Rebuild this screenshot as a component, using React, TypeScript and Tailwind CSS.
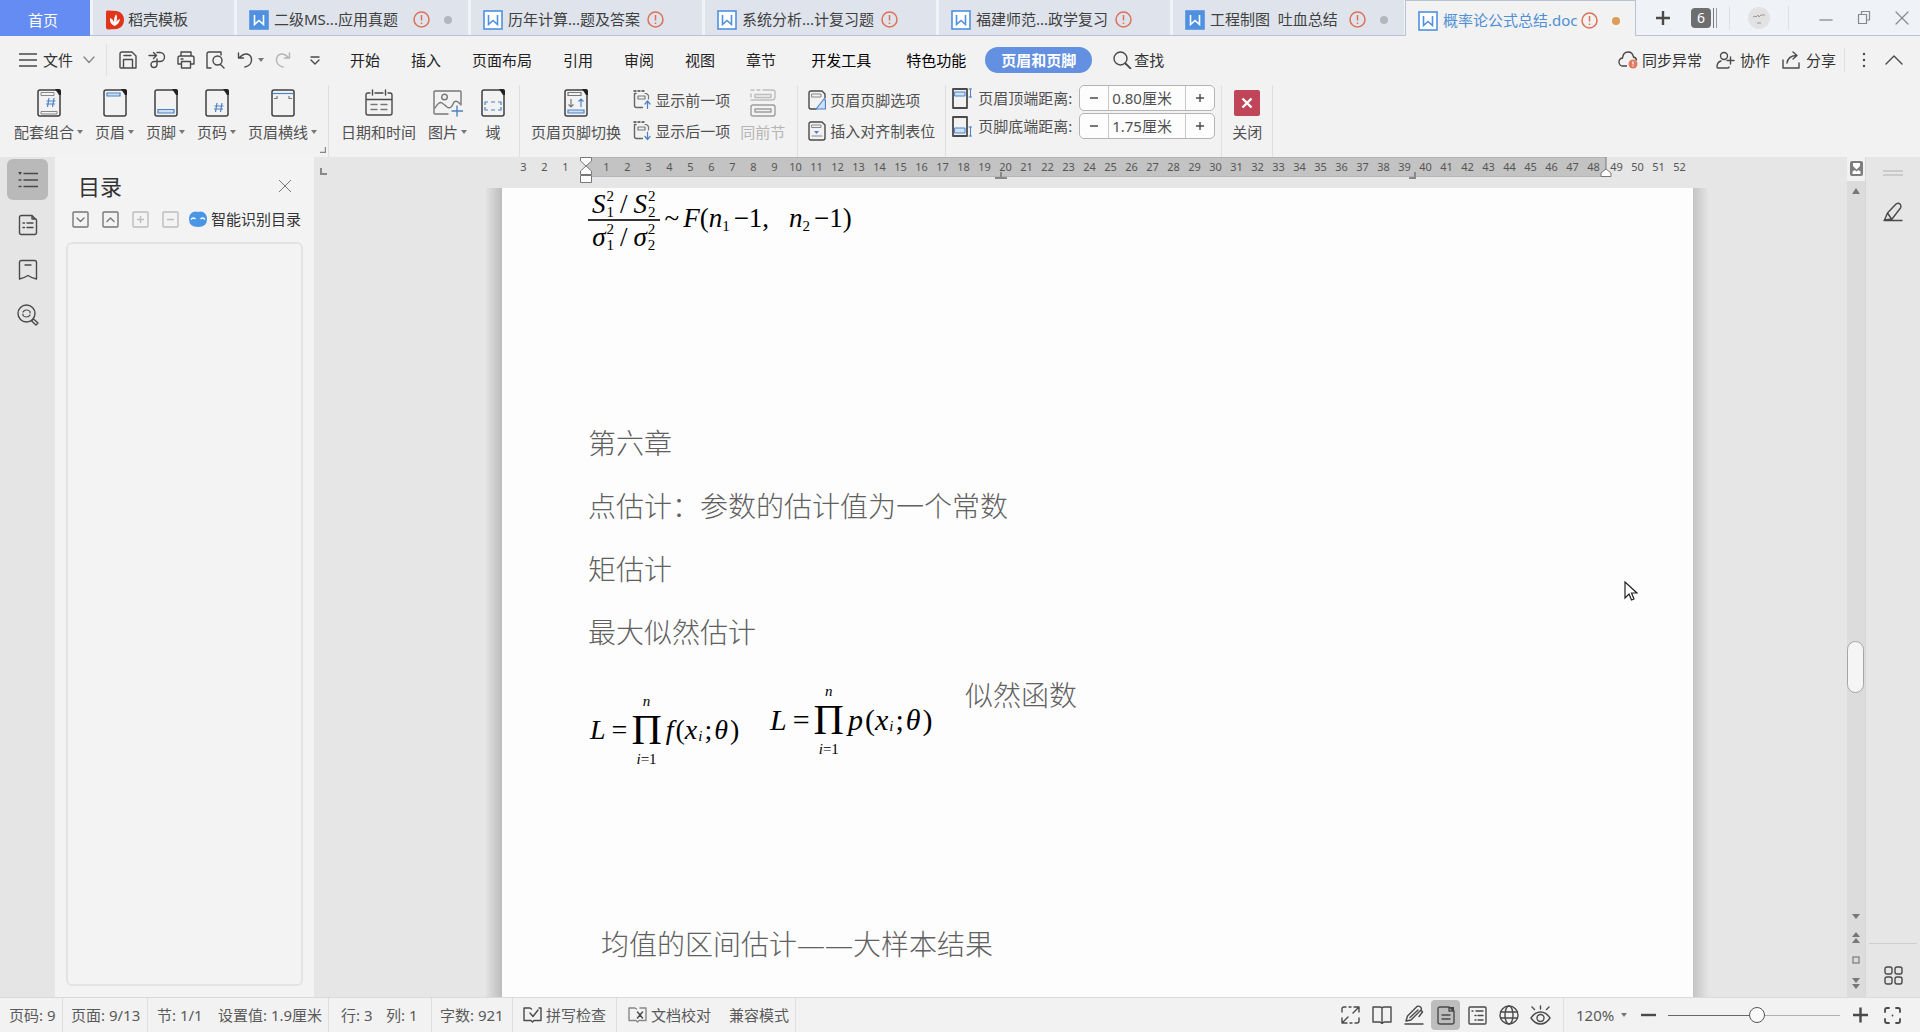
import React, { useState } from "react";

type IconProps = { w?: number; h?: number; children: React.ReactNode; className?: string };

const Svg = ({ w = 20, h = 20, children, className = "" }: IconProps) => (
  <svg
    width={w}
    height={h}
    viewBox={`0 0 ${w} ${h}`}
    fill="none"
    stroke="#4a4a4a"
    strokeWidth="1.4"
    strokeLinecap="round"
    strokeLinejoin="round"
    className={`shrink-0 ${className}`}
  >
    {children}
  </svg>
);

const Caret = () => (
  <svg width="6" height="4" viewBox="0 0 6 4" className="shrink-0" fill="#777">
    <path d="M0 0h6L3 4z" />
  </svg>
);

const Sep = ({ className = "" }: { className?: string }) => (
  <div className={`w-px shrink-0 bg-[#dfdfdf] ${className}`} />
);

/* ---------- title bar ---------- */

const WordIcon = ({ solid }: { solid?: boolean }) => (
  <svg width="20" height="20" viewBox="0 0 20 20" className="shrink-0" fill="none">
    <rect x="1" y="1" width="18" height="18" fill={solid ? "#4f91e0" : "#fff"} stroke="#4f91e0" strokeWidth="1.6" />
    <path d="M5.500 5v9.500L10 10.500l4.500 4V5" stroke={solid ? "#fff" : "#4f91e0"} strokeWidth="1.6" />
  </svg>
);

const Alert = () => (
  <svg width="17" height="17" viewBox="0 0 17 17" className="shrink-0" fill="none" stroke="#dd7059" strokeWidth="1.5">
    <circle cx="8.500" cy="8.500" r="7.500" />
    <path d="M8.500 4v5.500M8.500 11.500v1.500" />
  </svg>
);

const docTabs = [
  { title: "二级MS...应用真题", solid: true, dot: true },
  { title: "历年计算...题及答案", solid: false, dot: false },
  { title: "系统分析...计复习题", solid: false, dot: false },
  { title: "福建师范...政学复习", solid: false, dot: false },
  { title: "工程制图  吐血总结", solid: true, dot: true },
];

const TitleBar = () => (
  <header className="flex h-9 shrink-0 items-stretch bg-[#eff2f6] text-[15px] shadow-[inset_0_-1px_0_#b9c2d3]">
    <button className="w-[90px] shrink-0 bg-[#648cf2] pt-1 pr-1 text-white">首页</button>
    <div className="flex gap-[3px] pl-[3px]">
      <button className="mb-px flex w-[141px] items-center bg-[#dfe4ec] pt-1 pl-[13px]">
        <svg width="18" height="20" viewBox="0 0 18 20" className="mr-1 shrink-0">
          <path d="M0 2q0-2 2-1.500l9 .5q7 2 7 9t-7 9l-9 .5q-2 0-2-2z" fill="#e0341b" />
          <path d="M8.500 16Q3 13 4 8q3 1 4 4 0-5 2-8 2 4 0 8 1-2 4-3-.5 5-5.500 7z" fill="#fff" />
        </svg>
        稻壳模板
      </button>
      {docTabs.map((tab) => (
        <button key={tab.title} className="mb-px flex w-[231px] items-center bg-[#dfe4ec] pt-1 pl-3 text-left">
          <WordIcon solid={tab.solid} />
          <span className="ml-[5px] w-[132px] whitespace-pre">{tab.title}</span>
          <span className="ml-[7px]">
            <Alert />
          </span>
          {tab.dot && <span className="ml-[14px] h-2 w-2 rounded-full bg-[#b3b7bd]" />}
        </button>
      ))}
    </div>
    <button className="ml-px flex w-[231px] items-center border border-b-0 border-[#b9c2d3] bg-[#f2f2f2] pt-1 pl-3 text-left text-[#4f8fd6]">
      <WordIcon />
      <span className="ml-[5px] w-[138px] whitespace-nowrap">概率论公式总结.doc</span>
      <Alert />
      <span className="ml-[14px] h-2 w-2 rounded-full bg-[#dc9c5a]" />
    </button>
    <div className="ml-auto flex items-center pr-[11px]">
      <button aria-label="新建">
        <Svg w={16} h={16}>
          <path d="M8 1v14M1 8h14" strokeWidth="2.4" strokeLinecap="butt" />
        </Svg>
      </button>
      <button className="ml-5 flex items-center gap-px">
        <span className="h-5 w-5 rounded-sm bg-[#6e6e6e] text-center text-sm leading-5 text-white">6</span>
        <span className="ml-px h-5 w-px bg-[#777]" />
        <span className="ml-px h-5 w-px bg-[#999]" />
      </button>
      <Sep className="ml-3 h-6" />
      <span className="ml-[18px] flex h-[22px] w-[22px] items-center justify-center rounded-full bg-[#e2e2e2]">
        <svg width="14" height="14" viewBox="0 0 14 14" stroke="#999" fill="none">
          <path d="M1 6l2-1 1 1 2-2 1 2 2-2h4M5 12h4" />
        </svg>
      </span>
      <Sep className="ml-[18px] h-6" />
      <button aria-label="最小化" className="ml-[30px]">
        <Svg w={14} h={18}>
          <path d="M1 11h12" stroke="#999" strokeWidth="1.6" />
        </Svg>
      </button>
      <button aria-label="还原" className="ml-6">
        <Svg w={14} h={16}>
          <path d="M4.500 4V1.500h8V10H10M1.500 4.500h8v9h-8z" stroke="#888" strokeWidth="1.2" />
        </Svg>
      </button>
      <button aria-label="关闭窗口" className="ml-6">
        <Svg w={14} h={14}>
          <path d="M1 1l12 12M13 1L1 13" stroke="#888" strokeWidth="1.2" />
        </Svg>
      </button>
    </div>
  </header>
);

/* ---------- menu row ---------- */

const MenuRow = () => (
  <nav className="flex h-12 shrink-0 items-center text-[15px] whitespace-nowrap text-[#333]">
    <button className="ml-[19px] flex items-center">
      <Svg w={18} h={14}>
        <path d="M0 1h18M0 7h18M0 13h18" />
      </Svg>
      <span className="ml-[6px]">文件</span>
      <Svg w={12} h={8} className="ml-[10px]">
        <path d="M1 1l5 5.500L11 1" stroke="#888" />
      </Svg>
    </button>
    <Sep className="ml-[11px] h-8" />
    <div className="ml-3 flex items-center gap-[11px]">
      <button aria-label="保存">
        <Svg w={18} h={18}>
          <path d="M1 16V3q0-2 2-2h10l4 4v12H2q-1 0-1-1zM4.500 17V8.500h9V17M5 4.500h7" />
        </Svg>
      </button>
      <button aria-label="输出">
        <Svg w={18} h={18}>
          <path d="M1 4.500h7M5.500 1.500l3 3-3 3M9 1.500h3a4.500 4.500 0 010 9H9v3a3 3 0 01-6 0 3 3 0 013-3h3V8" />
        </Svg>
      </button>
      <button aria-label="打印">
        <Svg w={18} h={18}>
          <path d="M4 5V1h10v4M4 13H1V7q0-2 2-2h12q2 0 2 2v6h-3M4.500 10.500h9V17h-9zM4 8h2" />
        </Svg>
      </button>
      <button aria-label="打印预览">
        <Svg w={20} h={18}>
          <path d="M5 17H1V3q0-2 2-2h12v3M14.500 13.500L18 17" />
          <circle cx="11.500" cy="9.500" r="4.500" />
        </Svg>
      </button>
      <button aria-label="撤销" className="flex items-center gap-[5px]">
        <Svg w={16} h={16}>
          <path d="M1.500 1v5h5M2 6q4-4.500 8-4 5 1.500 4.500 6.500T8 15" />
        </Svg>
        <Caret />
      </button>
      <button aria-label="恢复">
        <Svg w={16} h={16}>
          <path d="M14.500 1v5h-5M14 6Q10 1.500 6 2 1 3.500 1.500 8.500T8 15" stroke="#b5b5b5" />
        </Svg>
      </button>
      <button aria-label="更多" className="ml-2">
        <Svg w={10} h={9}>
          <path d="M1 1h8M1 4l4 4 4-4" />
        </Svg>
      </button>
    </div>
    <div className="ml-[30px] flex gap-[31px] text-[#222]">
      {["开始", "插入", "页面布局", "引用", "审阅", "视图", "章节"].map((name) => (
        <button key={name}>{name}</button>
      ))}
    </div>
    <div className="ml-[35px] flex gap-[35px] text-black">
      {["开发工具", "特色功能"].map((name) => (
        <button key={name}>{name}</button>
      ))}
    </div>
    <button className="ml-[19px] h-[26px] rounded-full bg-[#6390e0] px-4 font-bold text-white">页眉和页脚</button>
    <button className="ml-[21px] flex items-center gap-[2px]">
      <Svg w={19} h={18}>
        <circle cx="7.500" cy="7.500" r="6.500" />
        <path d="M12.500 12.500l5 5" strokeWidth="1.8" />
      </Svg>
      查找
    </button>
    <div className="ml-auto flex items-center">
      <button className="flex items-center gap-1">
        <svg width="20" height="18" viewBox="0 0 20 18" fill="none" stroke="#444" strokeWidth="1.4">
          <path d="M9 15H5.500a4 4 0 01-1-8C5 3 7 1 10 1s5 2 5.500 5c2 .5 3 2 3 3.500" />
          <circle cx="15" cy="13" r="4.500" fill="#e07b62" stroke="none" />
          <path d="M15 10.500v3M15 14.500v1" stroke="#fff" strokeWidth="1.200" />
        </svg>
        同步异常
      </button>
      <button className="ml-[14px] flex items-center gap-[5px]">
        <Svg w={19} h={18}>
          <circle cx="8" cy="5" r="3.500" />
          <path d="M5 10q-4 1-4 6 0 1 1 1h10q1 0 1-1M11 9.500h7M14.500 6v7" />
        </Svg>
        协作
      </button>
      <button className="ml-3 flex items-center gap-[5px]">
        <Svg w={19} h={18}>
          <path d="M1 9v8h16v-5M5 12q1-7 9-7.500M11 1l4 3.500L11 8" />
        </Svg>
        分享
      </button>
      <Sep className="ml-2 h-6" />
      <button aria-label="选项" className="ml-[17px]">
        <Svg w={4} h={16}>
          <path d="M2 2v.1M2 8v.1M2 14v.1" strokeWidth="2.400" />
        </Svg>
      </button>
      <button aria-label="折叠功能区" className="mr-[17px] ml-[19px]">
        <Svg w={18} h={10}>
          <path d="M1 9l8-8 8 8" />
        </Svg>
      </button>
    </div>
  </nav>
);

/* ---------- ribbon ---------- */

const Sheet = ({ children, fold = true }: { children: React.ReactNode; fold?: boolean }) => (
  <svg width="24" height="28" viewBox="0 0 24 28" fill="none" stroke="#3f3f3f" strokeWidth="1.500">
    <rect x="1" y="1" width="22" height="26" rx="2" />
    {fold && <path d="M18 0h4q2 0 2 2v4h-2z" fill="#222" stroke="none" />}
    {children}
  </svg>
);

const Hash = ({ y }: { y: number }) => (
  <path d={`M12 ${y}l-1.500 9M17 ${y}l-1.500 9M9.500 ${y + 3}h9M9 ${y + 6}h9`} stroke="#4b82c8" strokeWidth="1.200" />
);

type ToolProps = { label: string; icon: React.ReactNode; caret?: boolean; muted?: boolean; className?: string };

const Tool = ({ label, icon, caret, muted, className = "" }: ToolProps) => (
  <button className={`flex shrink-0 flex-col items-center gap-[5px] ${muted ? "text-[#b5b5b5]" : ""} ${className}`}>
    {icon}
    <span className="flex items-center gap-[3px] leading-5">
      {label}
      {caret && <Caret />}
    </span>
  </button>
);

const SmallTool = ({ label, icon }: { label: string; icon: React.ReactNode }) => (
  <button className="flex items-center gap-1 leading-5">
    {icon}
    {label}
  </button>
);

const StepIcon = ({ down }: { down?: boolean }) => (
  <Svg w={18} h={20}>
    <path d="M3 3.500H1.500v12q0 2 2 2h6" stroke="#666" />
    <path d="M5 6h7v3H5zM12 3.500h1.500l2 2V9" stroke="#777" strokeWidth="1.200" />
    <path d="M1 1h2M5 1h2M9 1h2" stroke="#444" />
    <path d={down ? "M14.500 11v7M12 15.500l2.500 3 2.500-3" : "M14.500 18.500v-7M12 14l2.500-3 2.500 3"} stroke="#4b82c8" strokeWidth="1.200" />
  </Svg>
);

const Spinner = ({ id, label, initial, icon }: { id: string; label: string; initial: number; icon: React.ReactNode }) => {
  const [value, setValue] = useState(initial);

  return (
    <div className="flex h-[26px] items-center">
      {icon}
      <label htmlFor={id} className="w-[107px] pl-[6px]">
        {label}
      </label>
      <div className="flex h-[26px] w-[136px] overflow-hidden rounded-[5px] border border-[#b4b4b4] bg-[#fdfdfd]">
        <button aria-label="减少" className="flex w-7 items-center justify-center" onClick={() => setValue(value - 0.1)}>
          <Svg w={8} h={8}>
            <path d="M0 4h8" strokeLinecap="butt" />
          </Svg>
        </button>
        <input
          id={id}
          className="w-[78px] border-x border-[#c8c8c8] bg-transparent pl-[3px] outline-none"
          value={`${value.toFixed(2)}厘米`}
          readOnly
        />
        <button aria-label="增加" className="flex flex-1 items-center justify-center" onClick={() => setValue(value + 0.1)}>
          <Svg w={8} h={8}>
            <path d="M0 4h8M4 0v8" strokeLinecap="butt" />
          </Svg>
        </button>
      </div>
    </div>
  );
};

const Ribbon = () => (
  <div className="flex h-[73px] shrink-0 items-stretch pt-px text-[15px] whitespace-nowrap text-[#505050]">
    <div className="flex items-start gap-3 pt-1 pl-[14px]">
      <Tool
        caret
        label="配套组合"
        icon={
          <Sheet>
            <path d="M4 3.500h13v3H4zM4 22.500h16v2.500H4z" stroke="#888" strokeWidth="1" />
            <Hash y={9} />
          </Sheet>
        }
      />
      <Tool
        caret
        label="页眉"
        icon={
          <Sheet>
            <path d="M4 4h13v3H4z" fill="#cfe0f4" stroke="#4b82c8" strokeWidth="1.200" />
          </Sheet>
        }
      />
      <Tool
        caret
        label="页脚"
        icon={
          <Sheet>
            <path d="M4 20.500h16V24H4z" fill="#cfe0f4" stroke="#4b82c8" strokeWidth="1.200" />
          </Sheet>
        }
      />
      <Tool
        caret
        label="页码"
        icon={
          <Sheet>
            <Hash y={14} />
          </Sheet>
        }
      />
      <Tool
        caret
        label="页眉横线"
        icon={
          <Sheet fold={false}>
            <path d="M2 4.500h20" stroke="#4b82c8" strokeWidth="1.200" />
            <path d="M3 9.500h3V7M21 9.500h-3V7" stroke="#777" strokeWidth="1.200" />
          </Sheet>
        }
      />
    </div>
    <div className="flex w-[11px] items-end justify-center pb-1">
      <Svg w={6} h={6}>
        <path d="M5.500 0v5.500H0" stroke="#888" strokeLinecap="butt" />
      </Svg>
    </div>
    <Sep />
    <div className="flex items-start gap-3 px-3 pt-1">
      <Tool
        label="日期和时间"
        icon={
          <Svg w={28} h={28}>
            <path d="M5 4H3Q1 4 1 6v18q0 2 2 2h22q2 0 2-2V6q0-2-2-2h-2M10 4h8M7.500 1v5M20.500 1v5M1 10.500h26" />
            <path d="M6 15.500h6M16 15.500h6M6 20.500h6M16 20.500h6" stroke="#777" />
          </Svg>
        }
      />
      <Tool
        caret
        label="图片"
        icon={
          <Svg w={30} h={28}>
            <path d="M15 25H2q-1 0-1-1V3q0-1 1-1h25q1 0 1 1v13" stroke="#777" />
            <path d="M2 19q4-7 7-5t5 4q4 3 7-5 3-2 6 2" stroke="#777" />
            <circle cx="11.500" cy="8" r="2.800" stroke="#777" />
            <path d="M24 17v10M19 22h11" stroke="#4b82c8" />
          </Svg>
        }
      />
      <Tool
        className="w-7"
        label="域"
        icon={
          <Sheet>
            <path d="M4 16v-3h3M10 13h4M17 13h3v3M20 18v3h-3M14 21h-4M7 21H4v-3" stroke="#4b82c8" strokeWidth="1.200" />
          </Sheet>
        }
      />
    </div>
    <Sep />
    <div className="flex items-start pr-3 pl-[11px]">
      <Tool
        className="pt-1"
        label="页眉页脚切换"
        icon={
          <Sheet>
            <path d="M4 3.500h13v3H4zM7 10v8M4.500 15.500L7 18l2.500-2.500" stroke="#777" strokeWidth="1.200" />
            <path d="M17 18v-8M14.500 12.500L17 10l2.500 2.500" stroke="#4b82c8" strokeWidth="1.200" />
            <path d="M4 21h16v3H4z" fill="#cfe0f4" stroke="#4b82c8" strokeWidth="1.200" />
          </Sheet>
        }
      />
      <div className="ml-3 flex flex-col gap-[11px] pt-[5px]">
        <SmallTool label="显示前一项" icon={<StepIcon />} />
        <SmallTool label="显示后一项" icon={<StepIcon down />} />
      </div>
      <Tool
        muted
        className="ml-[10px] pt-1"
        label="同前节"
        icon={
          <Svg w={28} h={28}>
            <path d="M2 1h3M8 1h3M14 1h9q3 0 3 2v5q0 3-3 3H2M2 5v3M6 5.500h16v3H6z" stroke="#bdbdbd" />
            <path d="M4 16h20q2 0 2 2v7q0 2-2 2H4q-2 0-2-2v-7q0-2 2-2zM6 20h16v3H6z" stroke="#9d9d9d" />
          </Svg>
        }
      />
    </div>
    <Sep />
    <div className="flex flex-col gap-[11px] px-[10px] pt-[5px]">
      <SmallTool
        label="页眉页脚选项"
        icon={
          <Svg w={18} h={20}>
            <path d="M17 8V4l-3-3H3Q1 1 1 3v14q0 2 2 2h5" />
            <path d="M4 4h9v3H4z" stroke="#888" strokeWidth="1" />
            <path d="M8 19l8-10 1.500 1.500V19z" stroke="#4b82c8" fill="#cfe0f4" strokeWidth="1.200" />
          </Svg>
        }
      />
      <SmallTool
        label="插入对齐制表位"
        icon={
          <Svg w={18} h={20}>
            <path d="M14 1H3Q1 1 1 3v14q0 2 2 2h12q2 0 2-2V4z" />
            <path d="M4 4h9v2.500H4zM4 15h10" stroke="#888" strokeWidth="1" />
            <path d="M6 10h5l-2.500 3z" fill="#4b82c8" stroke="none" />
          </Svg>
        }
      />
    </div>
    <Sep />
    <div className="flex flex-col gap-[2px] pr-[6px] pl-[6px]">
      <Spinner
        id="header-distance"
        label="页眉顶端距离:"
        initial={0.8}
        icon={
          <Svg w={20} h={21}>
            <path d="M1 1h14v19H1z" strokeWidth="1.800" />
            <path d="M3 4h10v4H3z" fill="#cfe0f4" stroke="#4b82c8" strokeWidth="1" />
            <path d="M17 1h3M18.500 1v8M17 9h3" stroke="#4b82c8" strokeWidth="1" />
          </Svg>
        }
      />
      <Spinner
        id="footer-distance"
        label="页脚底端距离:"
        initial={1.75}
        icon={
          <Svg w={20} h={21}>
            <path d="M1 1h14v19H1z" strokeWidth="1.800" />
            <path d="M3 12h10v5H3z" fill="#cfe0f4" stroke="#4b82c8" strokeWidth="1" />
            <path d="M17 11h3M18.500 11v9M17 20h3" stroke="#4b82c8" strokeWidth="1" />
          </Svg>
        }
      />
    </div>
    <Sep />
    <div className="px-[10px] pt-1">
      <Tool
        label="关闭"
        icon={
          <svg width="26" height="28" viewBox="0 0 26 28">
            <rect y="1" width="26" height="26" rx="2" fill="#bf4658" />
            <path d="M8.500 9.500l9 9M17.500 9.500l-9 9" stroke="#fff" strokeWidth="2.400" />
          </svg>
        }
      />
    </div>
    <Sep />
  </div>
);

/* ---------- left side ---------- */

const SideRail = () => (
  <aside className="flex w-[55px] shrink-0 flex-col items-center gap-1 bg-[#e5e5e5] pt-[2px]">
    <button aria-label="目录" className="flex h-[41px] w-[41px] items-center justify-center rounded-md bg-[#b9b9b9]">
      <Svg w={20} h={18}>
        <path d="M6 2.500h14M6 9h14M6 15.500h14M1 9h2M1 15.500h2" />
        <path d="M0 1h4L2 4z" fill="#444" stroke="none" />
      </Svg>
    </button>
    <button aria-label="章节" className="flex h-[41px] w-[41px] items-center justify-center">
      <Svg w={20} h={22}>
        <path d="M14 1.500H3.500q-2 0-2 2v15q0 2 2 2h13q2 0 2-2V6zM14 1.500V5h4M9 9h6M9 13.500h6M5 9h1.500M5 13.500h1.500" />
      </Svg>
    </button>
    <button aria-label="书签" className="flex h-[41px] w-[41px] items-center justify-center">
      <Svg w={20} h={22}>
        <path d="M1.500 20V3.500q0-2 2-2h13q2 0 2 2V20q-5-1-8.500-3.500Q6 19 1.500 20zM7 6h6" />
      </Svg>
    </button>
    <button aria-label="查找和替换" className="flex h-[41px] w-[41px] items-center justify-center">
      <Svg w={22} h={22}>
        <circle cx="9.500" cy="9.500" r="8.500" />
        <path d="M6 8q1-2 3.500-2t3.500 1.500V9M13 11q-1 2-3.500 2T6 11.500V10" strokeWidth="1.200" />
        <path d="M14.500 17l2-2 4.500 4-2 2z" />
      </Svg>
    </button>
  </aside>
);

const boxIcons = [
  { name: "展开", d: "M5 7l3.500 3.500L12 7", color: "#777" },
  { name: "收起", d: "M5 10.500L8.500 7l3.500 3.500", color: "#777" },
  { name: "增加级别", d: "M5.500 8.500h6M8.500 5.500v6", color: "#bdbdbd" },
  { name: "降低级别", d: "M5.500 8.500h6", color: "#bdbdbd" },
];

const TocPanel = () => (
  <section className="flex w-[259px] shrink-0 flex-col bg-[#f3f3f3] px-[11px] pb-[11px]">
    <div className="flex h-[50px] items-center justify-between pt-2 pr-3 pl-3">
      <h2 className="text-[22px] text-[#333]">目录</h2>
      <button aria-label="关闭目录">
        <Svg w={12} h={12}>
          <path d="M0 0l12 12M12 0L0 12" stroke="#777" strokeWidth="1" />
        </Svg>
      </button>
    </div>
    <div className="flex h-6 items-center gap-[13px] pl-[6px]">
      {boxIcons.map((b) => (
        <button key={b.name} aria-label={b.name}>
          <Svg w={17} h={17}>
            <rect x="1" y="1" width="15" height="15" rx="1" stroke={b.color} />
            <path d={b.d} stroke={b.color} />
          </Svg>
        </button>
      ))}
      <button className="-ml-[3px] flex items-center gap-1 text-[15px] whitespace-nowrap text-[#333]">
        <svg width="18" height="16" viewBox="0 0 18 16">
          <path d="M9 1q2-1 5 0 4 2 4 7 0 8-9 8T0 8q0-5 4-7 3-1 5 0z" fill="#4b95e6" />
          <path d="M2 8.500Q4 6 6.500 8M11.500 8Q14 6 16 8.500" stroke="#fff" strokeWidth="1.400" fill="none" />
        </svg>
        智能识别目录
      </button>
    </div>
    <div className="mt-[11px] flex-1 rounded-md border-2 border-[#e3e3e3]" />
  </section>
);

/* ---------- document ---------- */

const Cells = ({ from, to, step = 1 }: { from: number; to: number; step?: number }) => {
  const list: number[] = [];
  for (let n = from; step > 0 ? n <= to : n >= to; n += step) list.push(n);
  return (
    <>
      {list.map((n) => (
        <span key={n} className="w-[21px] shrink-0 text-center">
          {n}
        </span>
      ))}
    </>
  );
};

const Ruler = () => (
  <div className="flex h-[31px] shrink-0 overflow-hidden text-[11px] leading-5 text-[#555]">
    <div className="flex w-[272px] shrink-0 justify-end pr-[10px]">
      <svg width="7" height="7" viewBox="0 0 7 7" className="mt-[11px] mr-auto ml-[6px]" stroke="#888" strokeWidth="2" fill="none">
        <path d="M1 0v6h6" />
      </svg>
      <Cells from={3} to={1} step={-1} />
    </div>
    <div className="relative flex h-5 w-[1020px] shrink-0 border-t border-b border-[#b3b3b3] bg-[#c3c3c3] pl-[10px] leading-[18px]">
      <Cells from={1} to={48} />
      <svg width="12" height="27" viewBox="0 0 12 27" className="absolute -top-px -left-[6px]" fill="#fff" stroke="#777">
        <path d="M.5.500h11V4L6 9 .5 4zM6 9l5.500 5v3.500H.5V14zM.5 18.500h11v7H.5z" />
      </svg>
      <svg width="12" height="7" viewBox="0 0 12 7" className="absolute -bottom-[3px] left-[409px]" stroke="#888" strokeWidth="2" fill="none">
        <path d="M0 6h12M6 0v6" />
      </svg>
      <svg width="7" height="7" viewBox="0 0 7 7" className="absolute -bottom-[3px] left-[823px]" stroke="#888" strokeWidth="2" fill="none">
        <path d="M0 6h6V0" />
      </svg>
      <svg width="12" height="20" viewBox="0 0 12 20" className="absolute -top-px -right-[6px]" fill="#fff" stroke="#777">
        <path d="M6 0v12l5 4v3.500H1V16l5-4" />
      </svg>
    </div>
    <Cells from={49} to={52} />
  </div>
);

const SubSup = ({ base, sup, sub }: { base: string; sup: string; sub: string }) => (
  <span className="inline-flex items-center">
    <i>{base}</i>
    <span className="ml-px flex flex-col text-[15px] leading-4">
      <span>{sup}</span>
      <span>{sub}</span>
    </span>
  </span>
);

const Product = ({ fn, className = "" }: { fn: string; className?: string }) => (
  <div className={`flex items-center font-['Liberation_Serif',serif] leading-8 text-black ${className}`}>
    <i>L</i>
    <span className="ml-[6px]">=</span>
    <span className="mx-1 flex flex-col items-center text-[15px] leading-4">
      <i>n</i>
      <span className="text-[42px] leading-[42px]">Π</span>
      <span>
        <i>i</i>=1
      </span>
    </span>
    <i>{fn}</i>
    <span className="ml-[2px]">(</span>
    <i>x</i>
    <i className="ml-px pt-3 text-[15px]">i</i>
    <span className="ml-[2px]">;</span>
    <i className="ml-[2px]">θ</i>
    <span className="ml-[2px]">)</span>
  </div>
);

const Page = () => (
  <article className="relative flex-1 overflow-hidden bg-[#fdfdfd] px-[86px] text-[28px] leading-[63px] font-light whitespace-nowrap text-[#606060]">
    <div className="flex h-[224px] items-start font-['Liberation_Serif',serif] text-[27px] leading-8 font-normal text-black">
      <div className="flex flex-col items-center">
        <div className="flex h-[33px] items-center border-b-2 border-[#333] px-1">
          <SubSup base="S" sup="2" sub="1" />
          <span className="mx-[6px]">/</span>
          <SubSup base="S" sup="2" sub="2" />
        </div>
        <div className="flex h-8 items-center">
          <SubSup base="σ" sup="2" sub="1" />
          <span className="mx-[6px]">/</span>
          <SubSup base="σ" sup="2" sub="2" />
        </div>
      </div>
      <div className="mt-[14px] ml-[5px] flex items-baseline">
        <span>~</span>
        <i className="ml-1">F</i>
        <span>(</span>
        <i>n</i>
        <sub className="text-[15px]">1</sub>
        <span className="ml-1">−1,</span>
        <i className="ml-5">n</i>
        <sub className="text-[15px]">2</sub>
        <span className="ml-1">−1)</span>
      </div>
    </div>
    <p>第六章</p>
    <p>点估计：参数的估计值为一个常数</p>
    <p>矩估计</p>
    <p>最大似然估计</p>
    <div className="flex h-[249px] items-start font-normal">
      <Product fn="f" className="mt-[29px] w-[182px] pl-[2px] text-[28px]" />
      <Product fn="p" className="mt-[19px] w-[195px] text-[30px]" />
      <p className="font-light">似然函数</p>
    </div>
    <p className="pl-[13px]">均值的区间估计——大样本结果</p>
    <svg width="14" height="21" viewBox="0 0 14 21" className="absolute top-[393px] right-[55px]" fill="#fff" stroke="#222" strokeWidth="1.200">
      <path d="M1 1v16l4-4 2.500 6 2.500-1-2.500-6H13z" />
    </svg>
  </article>
);

const ScrollBar = () => (
  <div className="flex w-[18px] shrink-0 flex-col items-center">
    <button aria-label="标尺" className="mt-1">
      <svg width="13" height="15" viewBox="0 0 13 15">
        <rect width="13" height="15" rx="2" fill="#7d7d7d" />
        <path d="M3 2h7v3L6.500 8.500 3 5zM2.500 13v-2.500l2-1.500 2 1.500 2-1.500 2 1.500V13z" fill="#fff" />
      </svg>
    </button>
    <div className="mt-[5px] flex w-full flex-1 flex-col items-center bg-[#dcdcdc]">
      <svg width="8" height="6" viewBox="0 0 8 6" className="mt-[7px]" fill="#777">
        <path d="M4 0l4 6H0z" />
      </svg>
      <div className="flex w-full flex-1 flex-col">
        <div className="grow-[446]" />
        <div className="h-[52px] w-[17px] rounded-full border border-[#a5a5a5] bg-[#f5f5f5]" />
        <div className="grow-[221]" />
      </div>
      <svg width="8" height="83" viewBox="0 0 8 83" fill="#777">
        <path d="M0 0h8L4 5zM4 18l4 5H0zM4 24l4 5H0zM0 64h8l-4 5zM0 70h8l-4 5z" />
        <rect x="1" y="43" width="6" height="6" fill="none" stroke="#888" strokeWidth="1.400" />
      </svg>
    </div>
  </div>
);

const RightRail = () => (
  <aside className="flex w-[55px] shrink-0 flex-col items-center border-l border-[#d8d8d8] bg-[#e6e6e6]">
    <Svg w={20} h={6} className="mt-[13px]">
      <path d="M0 1h20M0 5h20" stroke="#c2c2c2" />
    </Svg>
    <button aria-label="编辑" className="mt-[26px]">
      <Svg w={20} h={20}>
        <path d="M1 18.500h18M1.500 18l3-7L13 2q2.500-1.500 4 0t.5 4L9 17zM4.500 11l4 6" />
      </Svg>
    </button>
    <div className="mt-auto h-px w-12 bg-[#cfcfcf]" />
    <button aria-label="应用" className="mt-[22px] mb-[12px]">
      <Svg w={19} h={19}>
        <rect x="1" y="1" width="7" height="7" rx="2" />
        <rect x="11" y="1" width="7" height="7" rx="2" />
        <rect x="1" y="11" width="7" height="7" rx="2" />
        <rect x="11" y="11" width="7" height="7" rx="2" />
      </Svg>
    </button>
  </aside>
);

/* ---------- status bar ---------- */

const StatusBar = () => (
  <footer className="flex h-[35px] shrink-0 items-center border-t border-[#dadada] bg-[#f2f2f2] text-[15px] whitespace-nowrap text-[#5a5a5a]">
    <div className="flex h-full items-center">
      <span className="w-[62px] pl-[9px]">页码: 9</span>
      <Sep className="h-full" />
      <span className="w-[84px] pl-2">页面: 9/13</span>
      <Sep className="h-full" />
      <span className="w-[70px] pl-[9px]">节: 1/1</span>
      <span className="w-[110px]">设置值: 1.9厘米</span>
      <Sep className="h-full" />
      <span className="w-[57px] pl-3">行: 3</span>
      <span className="w-[45px]">列: 1</span>
      <Sep className="h-full" />
      <span className="w-[80px] pl-2">字数: 921</span>
      <Sep className="h-full" />
      <button className="flex w-[103px] items-center gap-1 pl-[10px]">
        <Svg w={19} h={16}>
          <path d="M9.500 15L8 13.500H1V1h6l1.500 1M16 1h2v12.500h-7L9.500 15M7 6l3 3.500L15 3" />
        </Svg>
        拼写检查
      </button>
      <Sep className="h-full" />
      <button className="flex w-[112px] items-center gap-1 pl-[11px]">
        <Svg w={19} h={16}>
          <path d="M9.500 15L8 13.500H1V1h6l1.500 1M12 1h6v12.500h-7L9.500 15" stroke="#888" />
          <path d="M9.500 5l5 6M14.500 5l-5 6" />
        </Svg>
        文档校对
      </button>
      <button className="w-[66px] text-left">兼容模式</button>
      <Sep className="h-full" />
    </div>
    <div className="ml-auto flex h-full items-center">
      <button aria-label="全屏" className="mr-3">
        <Svg w={19} h={18}>
          <path d="M1 6V3q0-2 2-2h2M8 1h2M13 1h5v5M18 1l-6 6M18 12v3q0 2-2 2h-2M11 17H9M6 17H1v-5M1 17l6-6" />
        </Svg>
      </button>
      <button aria-label="阅读版式" className="mr-3">
        <Svg w={20} h={18}>
          <path d="M10 2Q9 1 8 1H1v15h7l2 1.500 2-1.500h7V1h-7q-1 0-2 1zM10 2v15" />
        </Svg>
      </button>
      <button aria-label="写作模式" className="mr-[7px]">
        <Svg w={20} h={20}>
          <path d="M1 19h18M2 16l1.500-5L13 1.500q2-1 3.500.5t.5 3L7 15zM14 5L6 12.500M17 5l1.500 2-3.500 4.500" />
        </Svg>
      </button>
      <button aria-label="页面视图" className="flex h-[30px] w-[29px] items-center justify-center rounded bg-[#bdbdbd]">
        <Svg w={18} h={19}>
          <path d="M12 1H3Q1 1 1 3v13q0 2 2 2h12q2 0 2-2V5zM12 1v4h5M5 9h8M5 13h8" />
          <path d="M12 1l5 5V1z" fill="#444" stroke="none" />
        </Svg>
      </button>
      <button aria-label="大纲" className="ml-2">
        <Svg w={19} h={19}>
          <rect x="1" y="1" width="17" height="17" rx="1" />
          <path d="M4 5h1M8 5h7M7 9.500h1M10 9.500h5M7 14h1M10 14h5" />
        </Svg>
      </button>
      <button aria-label="Web版式" className="ml-3">
        <Svg w={20} h={20}>
          <circle cx="10" cy="10" r="9" />
          <ellipse cx="10" cy="10" rx="4" ry="9" />
          <path d="M1.500 7h17M1.500 13h17" />
        </Svg>
      </button>
      <button aria-label="护眼模式" className="ml-[11px]">
        <Svg w={21} h={20}>
          <path d="M1 13q4-6 9.500-6t9.500 6q-4 6-9.500 6T1 13zM10.500 1v3M2 2l2.500 2.500M19 2l-2.500 2.500" />
          <circle cx="10.500" cy="13" r="3.500" />
        </Svg>
      </button>
      <Sep className="ml-3 h-full" />
      <label className="ml-3 flex items-center gap-1">
        <select aria-label="显示比例" className="w-[41px] appearance-none bg-transparent outline-none">
          <option>120%</option>
        </select>
        <Caret />
      </label>
      <button aria-label="缩小" className="ml-[14px]">
        <Svg w={15} h={16}>
          <path d="M0 8h15" strokeWidth="2.400" strokeLinecap="butt" />
        </Svg>
      </button>
      <input
        type="range"
        aria-label="缩放"
        min={0}
        max={100}
        defaultValue={52}
        className="ml-3 h-5 w-[172px] appearance-none bg-transparent [&::-webkit-slider-runnable-track]:h-px [&::-webkit-slider-runnable-track]:bg-[linear-gradient(90deg,#666_52%,#b0b0b0_52%)] [&::-webkit-slider-thumb]:-mt-2 [&::-webkit-slider-thumb]:h-4 [&::-webkit-slider-thumb]:w-4 [&::-webkit-slider-thumb]:appearance-none [&::-webkit-slider-thumb]:rounded-full [&::-webkit-slider-thumb]:border [&::-webkit-slider-thumb]:border-[#555] [&::-webkit-slider-thumb]:bg-[#fafafa]"
      />
      <button aria-label="放大" className="ml-[13px]">
        <Svg w={15} h={16}>
          <path d="M0 8h15M7.500.500v15" strokeWidth="2.400" strokeLinecap="butt" />
        </Svg>
      </button>
      <button aria-label="最佳显示" className="mr-[19px] ml-4">
        <Svg w={17} h={17}>
          <path d="M1 5V3q0-2 2-2h2M12 1h2q2 0 2 2v2M16 12v2q0 2-2 2h-2M5 16H3q-2 0-2-2v-2M8.500 8.500v.1" strokeWidth="1.800" />
        </Svg>
      </button>
    </div>
  </footer>
);

const App = () => {
  return (
    <div className="flex h-screen flex-col overflow-hidden bg-[#f2f2f2] font-['Noto_Sans','Noto_Sans_CJK_SC',sans-serif] text-[#404040]">
      <TitleBar />
      <MenuRow />
      <Ribbon />
      <main className="flex min-h-0 flex-1">
        <SideRail />
        <TocPanel />
        <section className="flex min-w-0 flex-1 flex-col bg-[#e6e6e6]">
          <Ruler />
          <div className="flex min-h-0 flex-1 pr-[138px] pl-[172px]">
            <div className="w-4 shrink-0 bg-linear-to-r from-[#e2e2e2] to-[#bcbcbc]" />
            <Page />
            <div className="w-4 shrink-0 bg-linear-to-l from-[#e6e6e6] to-[#c4c4c4]" />
          </div>
        </section>
        <ScrollBar />
        <RightRail />
      </main>
      <StatusBar />
    </div>
  );
};

export default App;
